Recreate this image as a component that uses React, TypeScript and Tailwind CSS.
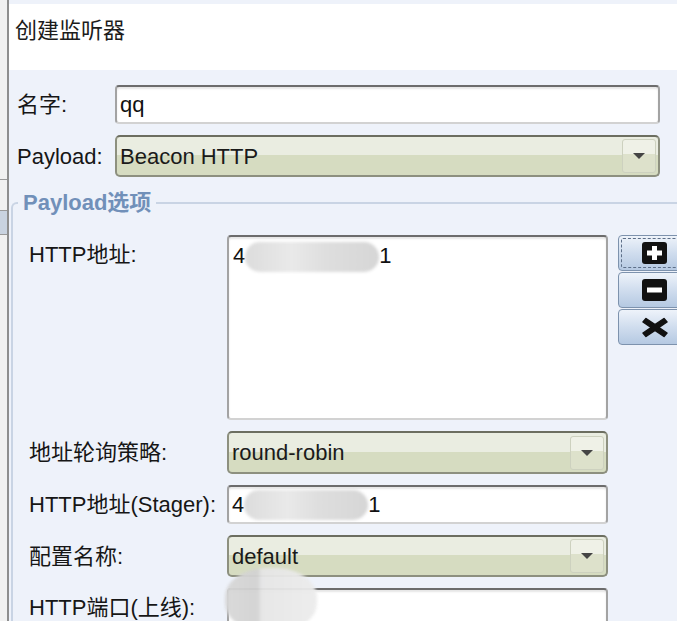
import React from 'react';

const Blob = ({ w, h }: { w: number; h: number }) => (
  <span
    className="inline-block align-middle rounded-full bg-[linear-gradient(90deg,#dcdcdc,#e9e9e9_35%,#dedede_60%,#d6d6d6)] blur-[1.5px]"
    style={{ width: w, height: h }}
  />
);

const Input = ({ children, className = '' }: { children?: React.ReactNode; className?: string }) => (
  <div
    className={`h-[39px] rounded-[4px] border-2 border-[#a3a3a3] border-t-[#6c6c6c] border-b-[#d2d2d2] bg-white shadow-[inset_0_2px_2px_rgba(0,0,0,0.1)] flex items-center px-[3px] text-[#111] ${className}`}
  >
    {children}
  </div>
);

const Select = ({ value, className = '' }: { value: string; className?: string }) => (
  <div
    className={`h-[42px] rounded-[5px] border-2 border-[#8d907f] border-t-[#6c6e60] bg-[linear-gradient(to_bottom,#eaede1_0%,#eaede1_48%,#d6dcc1_48%,#d6dcc1_100%)] flex items-center pl-[3px] pr-[2px] ${className}`}
  >
    <span className="flex-1 text-[#1a1a1a]">{value}</span>
    <div className="w-[34px] h-[34px] rounded-[3px] border border-[#cdd1bf] bg-[linear-gradient(to_bottom,#eff1e7_0%,#eff1e7_45%,#dde1cb_45%,#dde1cb_100%)] flex items-center justify-center">
      <svg width="12" height="6" viewBox="0 0 12 6">
        <path d="M0 0h12L6 6z" fill="#444" />
      </svg>
    </div>
  </div>
);

const SideButton = ({ children, focused }: { children: React.ReactNode; focused?: boolean }) => (
  <button className="h-[36px] w-[70px] rounded-[4px] border border-[#7d92ad] bg-[linear-gradient(to_bottom,#eef3fa,#d0ddee_50%,#b5c9e2)] p-[2px]">
    <div
      className={`h-full w-full rounded-[2px] flex items-center pl-[20px] ${focused ? 'border border-dashed border-[#5d6f88]' : 'border border-transparent'}`}
    >
      {children}
    </div>
  </button>
);

export default function App() {
  return (
    <div className="flex w-[677px] h-[621px] overflow-hidden font-['Liberation_Sans','Noto_Sans_CJK_SC',sans-serif] text-[22px] text-[#161616]">
      {/* left window edge */}
      <div className="w-[9px] shrink-0 bg-[#f1f1f1] border-r-2 border-[#8e8e8e] flex flex-col">
        <div className="h-[179px]" />
        <div className="h-[1px] bg-[#9a9a9a]" />
        <div className="h-[30px]" />
        <div className="h-[25px] bg-[#c9d3e0] border-y border-[#9a9a9a]" />
      </div>

      <div className="flex-1 min-w-0 bg-[#eef2fa] flex flex-col">
        {/* title */}
        <div className="mt-[4px] h-[66px] shrink-0 bg-white pl-[6px] pt-[14px] text-[22px] leading-[26px] text-[#1c1c1c]">
          创建监听器
        </div>

        {/* name */}
        <div className="mt-[15px] flex items-center pl-[8px] pr-[17px]">
          <div className="w-[98px] shrink-0">名字:</div>
          <Input className="flex-1">qq</Input>
        </div>

        {/* payload */}
        <div className="mt-[11px] flex items-center pl-[8px] pr-[17px]">
          <div className="w-[98px] shrink-0">Payload:</div>
          <Select value="Beacon HTTP" className="flex-1" />
        </div>

        {/* payload options group */}
        <fieldset className="mt-[13px] ml-[2px] w-[720px] shrink-0 border-t-2 border-l-2 border-r-0 border-b-0 border-[#c9d4e4] rounded-tl-[6px] p-0 m-0">
          <legend className="ml-[5px] px-[5px] text-[22px] leading-[26px] font-bold text-[#7190b9]">Payload选项</legend>

          <div className="pl-[16px] pt-[19px] flex flex-col gap-[11px]">
            <div className="flex items-start">
              <div className="w-[198px] shrink-0 mt-[7px] leading-[26px]">HTTP地址:</div>
              <div className="w-[381px] h-[185px] rounded-[4px] border-2 border-[#a3a3a3] border-t-[#6c6c6c] border-b-[#d2d2d2] bg-white shadow-[inset_0_2px_2px_rgba(0,0,0,0.1)] px-[4px] pt-[4px] leading-[30px] text-[#111]">
                4<Blob w={134} h={30} />1
              </div>
              <div className="ml-[10px] flex flex-col gap-[1px]">
                <SideButton focused>
                  <svg width="25" height="22" viewBox="0 0 25 22">
                    <rect width="25" height="22" rx="3" fill="#111" />
                    <path d="M10 4h5v4.5h5v5h-5V18h-5v-4.5H5v-5h5z" fill="#fff" />
                  </svg>
                </SideButton>
                <SideButton>
                  <svg width="25" height="22" viewBox="0 0 25 22">
                    <rect width="25" height="22" rx="3" fill="#111" />
                    <rect x="5" y="8.5" width="15" height="5" fill="#fff" />
                  </svg>
                </SideButton>
                <SideButton>
                  <svg width="26" height="21" viewBox="0 0 26 21">
                    <path d="M4 1.5L13 7.5 22 1.5 25 5 17 10.5 25 16 22 19.5 13 13.5 4 19.5 1 16 9 10.5 1 5z" fill="#111" stroke="#111" strokeWidth="1.5" strokeLinejoin="round" />
                  </svg>
                </SideButton>
              </div>
            </div>

            <div className="flex items-center">
              <div className="w-[198px] shrink-0">地址轮询策略:</div>
              <Select value="round-robin" className="w-[381px] h-[43px]" />
            </div>

            <div className="flex items-center">
              <div className="w-[198px] shrink-0">HTTP地址(Stager):</div>
              <Input className="w-[381px]">
                4<Blob w={124} h={30} />1
              </Input>
            </div>

            <div className="flex items-center">
              <div className="w-[198px] shrink-0">配置名称:</div>
              <Select value="default" className="w-[381px]" />
            </div>

            <div className="flex items-center">
              <div className="w-[198px] shrink-0">HTTP端口(上线):</div>
              <div className="relative">
                <Input className="w-[381px]" />
                <div className="absolute -left-[2px] -top-[20px] w-[92px] h-[64px] rounded-[45%] bg-[linear-gradient(90deg,#d8d8d8,#d2d2d2_35%,#e6e6e6_40%,#ececec)] blur-[1.5px] opacity-95" />
              </div>
            </div>
          </div>
        </fieldset>
      </div>
    </div>
  );
}
